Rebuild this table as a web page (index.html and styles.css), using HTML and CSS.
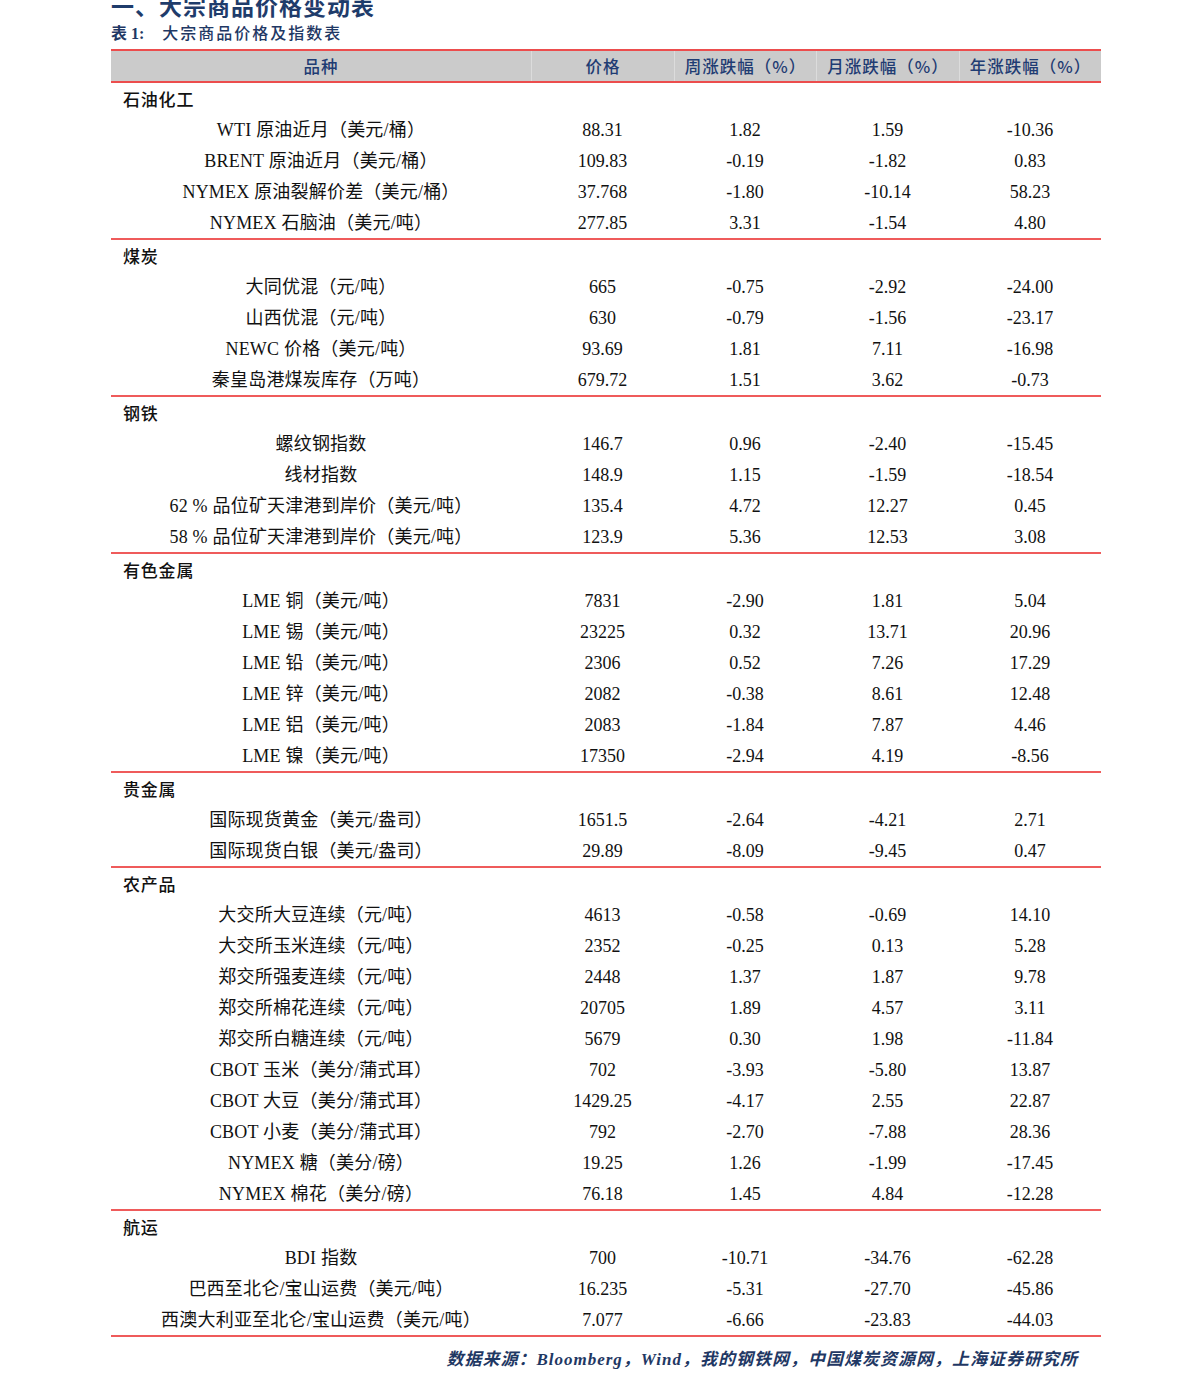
FILE: index.html
```html
<!DOCTYPE html>
<html lang="zh">
<head>
<meta charset="utf-8">
<title>大宗商品价格变动表</title>
<link rel="stylesheet" href="styles.css">
</head>
<body>
<div class="page">
  <h1 class="title">一、大宗商品价格变动表</h1>
  <h2 class="subtitle"><b>表 1:</b> 大宗商品价格及指数表</h2>
  <div class="table">
    <div class="row head">
      <div class="cell">品种</div>
      <div class="cell">价格</div>
      <div class="cell">周涨跌幅（%）</div>
      <div class="cell">月涨跌幅（%）</div>
      <div class="cell">年涨跌幅（%）</div>
    </div>

    <div class="group">
      <div class="row cat"><div class="cell">石油化工</div></div>
      <div class="row"><div class="cell name">WTI 原油近月（美元/桶）</div><div class="cell">88.31</div><div class="cell">1.82</div><div class="cell">1.59</div><div class="cell">-10.36</div></div>
      <div class="row"><div class="cell name">BRENT 原油近月（美元/桶）</div><div class="cell">109.83</div><div class="cell">-0.19</div><div class="cell">-1.82</div><div class="cell">0.83</div></div>
      <div class="row"><div class="cell name">NYMEX 原油裂解价差（美元/桶）</div><div class="cell">37.768</div><div class="cell">-1.80</div><div class="cell">-10.14</div><div class="cell">58.23</div></div>
      <div class="row"><div class="cell name">NYMEX 石脑油（美元/吨）</div><div class="cell">277.85</div><div class="cell">3.31</div><div class="cell">-1.54</div><div class="cell">4.80</div></div>
    </div>

    <div class="group">
      <div class="row cat"><div class="cell">煤炭</div></div>
      <div class="row"><div class="cell name">大同优混（元/吨）</div><div class="cell">665</div><div class="cell">-0.75</div><div class="cell">-2.92</div><div class="cell">-24.00</div></div>
      <div class="row"><div class="cell name">山西优混（元/吨）</div><div class="cell">630</div><div class="cell">-0.79</div><div class="cell">-1.56</div><div class="cell">-23.17</div></div>
      <div class="row"><div class="cell name">NEWC 价格（美元/吨）</div><div class="cell">93.69</div><div class="cell">1.81</div><div class="cell">7.11</div><div class="cell">-16.98</div></div>
      <div class="row"><div class="cell name">秦皇岛港煤炭库存（万吨）</div><div class="cell">679.72</div><div class="cell">1.51</div><div class="cell">3.62</div><div class="cell">-0.73</div></div>
    </div>

    <div class="group">
      <div class="row cat"><div class="cell">钢铁</div></div>
      <div class="row"><div class="cell name">螺纹钢指数</div><div class="cell">146.7</div><div class="cell">0.96</div><div class="cell">-2.40</div><div class="cell">-15.45</div></div>
      <div class="row"><div class="cell name">线材指数</div><div class="cell">148.9</div><div class="cell">1.15</div><div class="cell">-1.59</div><div class="cell">-18.54</div></div>
      <div class="row"><div class="cell name">62 % 品位矿天津港到岸价（美元/吨）</div><div class="cell">135.4</div><div class="cell">4.72</div><div class="cell">12.27</div><div class="cell">0.45</div></div>
      <div class="row"><div class="cell name">58 % 品位矿天津港到岸价（美元/吨）</div><div class="cell">123.9</div><div class="cell">5.36</div><div class="cell">12.53</div><div class="cell">3.08</div></div>
    </div>

    <div class="group">
      <div class="row cat"><div class="cell">有色金属</div></div>
      <div class="row"><div class="cell name">LME 铜（美元/吨）</div><div class="cell">7831</div><div class="cell">-2.90</div><div class="cell">1.81</div><div class="cell">5.04</div></div>
      <div class="row"><div class="cell name">LME 锡（美元/吨）</div><div class="cell">23225</div><div class="cell">0.32</div><div class="cell">13.71</div><div class="cell">20.96</div></div>
      <div class="row"><div class="cell name">LME 铅（美元/吨）</div><div class="cell">2306</div><div class="cell">0.52</div><div class="cell">7.26</div><div class="cell">17.29</div></div>
      <div class="row"><div class="cell name">LME 锌（美元/吨）</div><div class="cell">2082</div><div class="cell">-0.38</div><div class="cell">8.61</div><div class="cell">12.48</div></div>
      <div class="row"><div class="cell name">LME 铝（美元/吨）</div><div class="cell">2083</div><div class="cell">-1.84</div><div class="cell">7.87</div><div class="cell">4.46</div></div>
      <div class="row"><div class="cell name">LME 镍（美元/吨）</div><div class="cell">17350</div><div class="cell">-2.94</div><div class="cell">4.19</div><div class="cell">-8.56</div></div>
    </div>

    <div class="group">
      <div class="row cat"><div class="cell">贵金属</div></div>
      <div class="row"><div class="cell name">国际现货黄金（美元/盎司）</div><div class="cell">1651.5</div><div class="cell">-2.64</div><div class="cell">-4.21</div><div class="cell">2.71</div></div>
      <div class="row"><div class="cell name">国际现货白银（美元/盎司）</div><div class="cell">29.89</div><div class="cell">-8.09</div><div class="cell">-9.45</div><div class="cell">0.47</div></div>
    </div>

    <div class="group">
      <div class="row cat"><div class="cell">农产品</div></div>
      <div class="row"><div class="cell name">大交所大豆连续（元/吨）</div><div class="cell">4613</div><div class="cell">-0.58</div><div class="cell">-0.69</div><div class="cell">14.10</div></div>
      <div class="row"><div class="cell name">大交所玉米连续（元/吨）</div><div class="cell">2352</div><div class="cell">-0.25</div><div class="cell">0.13</div><div class="cell">5.28</div></div>
      <div class="row"><div class="cell name">郑交所强麦连续（元/吨）</div><div class="cell">2448</div><div class="cell">1.37</div><div class="cell">1.87</div><div class="cell">9.78</div></div>
      <div class="row"><div class="cell name">郑交所棉花连续（元/吨）</div><div class="cell">20705</div><div class="cell">1.89</div><div class="cell">4.57</div><div class="cell">3.11</div></div>
      <div class="row"><div class="cell name">郑交所白糖连续（元/吨）</div><div class="cell">5679</div><div class="cell">0.30</div><div class="cell">1.98</div><div class="cell">-11.84</div></div>
      <div class="row"><div class="cell name">CBOT 玉米（美分/蒲式耳）</div><div class="cell">702</div><div class="cell">-3.93</div><div class="cell">-5.80</div><div class="cell">13.87</div></div>
      <div class="row"><div class="cell name">CBOT 大豆（美分/蒲式耳）</div><div class="cell">1429.25</div><div class="cell">-4.17</div><div class="cell">2.55</div><div class="cell">22.87</div></div>
      <div class="row"><div class="cell name">CBOT 小麦（美分/蒲式耳）</div><div class="cell">792</div><div class="cell">-2.70</div><div class="cell">-7.88</div><div class="cell">28.36</div></div>
      <div class="row"><div class="cell name">NYMEX 糖（美分/磅）</div><div class="cell">19.25</div><div class="cell">1.26</div><div class="cell">-1.99</div><div class="cell">-17.45</div></div>
      <div class="row"><div class="cell name">NYMEX 棉花（美分/磅）</div><div class="cell">76.18</div><div class="cell">1.45</div><div class="cell">4.84</div><div class="cell">-12.28</div></div>
    </div>

    <div class="group">
      <div class="row cat"><div class="cell">航运</div></div>
      <div class="row"><div class="cell name">BDI 指数</div><div class="cell">700</div><div class="cell">-10.71</div><div class="cell">-34.76</div><div class="cell">-62.28</div></div>
      <div class="row"><div class="cell name">巴西至北仑/宝山运费（美元/吨）</div><div class="cell">16.235</div><div class="cell">-5.31</div><div class="cell">-27.70</div><div class="cell">-45.86</div></div>
      <div class="row"><div class="cell name">西澳大利亚至北仑/宝山运费（美元/吨）</div><div class="cell">7.077</div><div class="cell">-6.66</div><div class="cell">-23.83</div><div class="cell">-44.03</div></div>
    </div>
  </div>
  <p class="source">数据来源：Bloomberg，Wind，我的钢铁网，中国煤炭资源网，上海证券研究所</p>
</div>
</body>
</html>
```

FILE: styles.css
```css
html, body {
  margin: 0;
  padding: 0;
  background: #ffffff;
}

body {
  font-family: "Liberation Serif", "Noto Sans CJK SC", serif;
  color: #111111;
}

.page {
  width: 990px;
  padding-left: 111px;
  overflow: hidden;
}

.title {
  margin: -9px 0 0 0;
  font-family: "Noto Sans CJK SC", sans-serif;
  font-size: 23px;
  line-height: 28px;
  font-weight: 700;
  color: #1f3c6b;
  letter-spacing: 1px;
  white-space: nowrap;
}

.subtitle {
  margin: 4px 0 0 0;
  font-family: "Liberation Serif", "Noto Sans CJK SC", serif;
  font-size: 16px;
  line-height: 22px;
  font-weight: 500;
  color: #1f3864;
  letter-spacing: 2px;
  height: 26px;
}

.subtitle b {
  font-weight: 700;
  letter-spacing: 0;
  margin-right: 12px;
}

.table {
  width: 990px;
}

.row {
  display: grid;
  grid-template-columns: 420px 143px 142px 143px 142px;
  height: 31px;
  align-items: center;
  font-size: 18px;
}

.cell {
  text-align: center;
  white-space: nowrap;
  line-height: 20px;
}

.head {
  height: 34px;
  box-sizing: border-box;
  background: #cbcbcb;
  border-top: 2px solid #ec4d4d;
  border-bottom: 2px solid #ec4d4d;
  color: #1f3c73;
  font-size: 16.5px;
  align-items: stretch;
}

.head .cell {
  display: flex;
  align-items: center;
  justify-content: center;
  letter-spacing: 1px;
  font-family: "Noto Sans CJK SC", sans-serif;
  font-weight: 500;
  border-left: 1px solid #dcdcdc;
}

.head .cell:first-child {
  border-left: none;
}

.group {
  border-bottom: 2px solid #ef5b5b;
}

.cat .cell {
  grid-column: 1 / -1;
  text-align: left;
  padding-left: 12px;
  font-size: 17px;
  letter-spacing: 0.8px;
  font-family: "Noto Sans CJK SC", sans-serif;
  font-weight: 500;
}

.name {
  font-size: 18px;
  letter-spacing: 0.2px;
}

.source {
  margin: 12px 0 0 0;
  padding-right: 23px;
  text-align: right;
  font-size: 17px;
  line-height: 22px;
  font-weight: 700;
  font-style: italic;
  color: #1f3864;
  letter-spacing: 1px;
  white-space: nowrap;
}
```
